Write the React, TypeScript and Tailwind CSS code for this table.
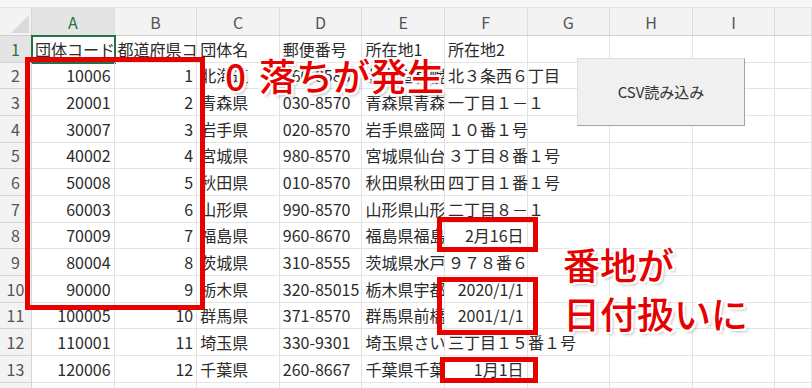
import React from "react";

type Cell = string | number;

const COLS = ["A", "B", "C", "D", "E", "F", "G", "H", "I", ""];

const ROWS: Cell[][] = [
  ["団体コード", "都道府県コード", "団体名", "郵便番号", "所在地1", "所在地2"],
  [10006, 1, "北海道", "060-8588", "北海道札幌", "北３条西６丁目"],
  [20001, 2, "青森県", "030-8570", "青森県青森", "一丁目１－１"],
  [30007, 3, "岩手県", "020-8570", "岩手県盛岡", "１０番１号"],
  [40002, 4, "宮城県", "980-8570", "宮城県仙台", "３丁目８番１号"],
  [50008, 5, "秋田県", "010-8570", "秋田県秋田", "四丁目１番１号"],
  [60003, 6, "山形県", "990-8570", "山形県山形", "二丁目８－１"],
  [70009, 7, "福島県", "960-8670", "福島県福島", "2月16日"],
  [80004, 8, "茨城県", "310-8555", "茨城県水戸", "９７８番６"],
  [90000, 9, "栃木県", "320-85015", "栃木県宇都", "2020/1/1"],
  [100005, 10, "群馬県", "371-8570", "群馬県前橋", "2001/1/1"],
  [110001, 11, "埼玉県", "330-9301", "埼玉県さい", "三丁目１５番１号"],
  [120006, 12, "千葉県", "260-8667", "千葉県千葉", "1月1日"],
  [],
];

// numbers and dates sit on the right like Excel does it
function isRight(v: Cell | undefined) {
  if (v === undefined || v === "") return false;
  if (typeof v === "number") return true;
  return /^\d+(\/|月)/.test(v);
}

const outline =
  "[text-shadow:0_0_2px_#fff,2px_0_0_#fff,-2px_0_0_#fff,0_2px_0_#fff,0_-2px_0_#fff,2px_2px_0_#fff,-2px_-2px_0_#fff,2px_-2px_0_#fff,-2px_2px_0_#fff,3px_3px_3px_rgba(0,0,0,0.25)]";

function HeaderRow() {
  return (
    <div className="grid grid-cols-[32px_repeat(9,82.6px)_1fr] h-[28px] bg-[#f3f3f3] border-b border-[#cfcfcf]">
      <div className="flex items-end justify-end border-r border-[#d6d6d6] pr-[2px] pb-[2px]">
        <svg width="18" height="18" viewBox="0 0 18 18">
          <polygon points="18,0 18,18 0,18" fill="#dadada" />
        </svg>
      </div>
      {COLS.map((c, i) => (
        <div
          key={i}
          className={
            "flex items-center justify-center text-[16px] border-r border-[#dcdcdc] " +
            (c === "A" ? "bg-[#e4e4e4] text-[#217346]" : "text-[#555]")
          }
        >
          {c}
        </div>
      ))}
    </div>
  );
}

function SheetRow({ n, cells }: { n: number; cells: Cell[] }) {
  return (
    <div className="grid grid-cols-[32px_repeat(9,82.6px)_1fr] h-[26.67px]">
      <div
        className={
          "flex items-center justify-center text-[16px] border-r border-b border-[#d6d6d6] " +
          (n === 1 ? "bg-[#e4e4e4] text-[#217346]" : "bg-[#f3f3f3] text-[#555]")
        }
      >
        {n}
      </div>
      {COLS.map((_, i) => {
        const v = cells[i];
        const right = isRight(v);
        const next = cells[i + 1];
        const spill = !right && (next === undefined || next === "");
        return (
          <div
            key={i}
            className={
              "flex items-center whitespace-nowrap px-[3px] text-[16px] leading-none text-[#2b2b2b] border-r border-b border-[#e3e3e3] " +
              (right ? "justify-end " : "justify-start ") +
              (spill ? "overflow-visible " : "overflow-hidden ") +
              (n === 1 && i === 0 ? "outline-2 outline-[#217346] -outline-offset-1" : "")
            }
          >
            {v === undefined ? "" : String(v)}
          </div>
        );
      })}
    </div>
  );
}

export default function App() {
  return (
    <div className="relative w-[812px] h-[388px] overflow-hidden bg-white font-['Noto_Sans_CJK_JP','Noto_Sans',sans-serif]">
      <div className="h-[8px] bg-[#f7f7f7] border-b border-[#e6e6e6]" />
      <HeaderRow />
      {ROWS.map((r, i) => (
        <SheetRow key={i} n={i + 1} cells={r} />
      ))}

      {/* CSV button floating on the sheet */}
      <button className="absolute left-[577px] top-[58px] w-[168px] h-[68px] bg-[#f0f0f0] border border-[#dedede] border-r-[#a3a3a3] border-b-[#a3a3a3] text-[15px] text-[#333]">
        CSV読み込み
      </button>

      {/* red callout boxes */}
      <div className="absolute left-[25px] top-[57px] w-[180px] h-[253px] border-[5px] border-[#e60000]" />
      <div className="absolute left-[437px] top-[217px] w-[101px] h-[35px] border-[5px] border-[#e60000]" />
      <div className="absolute left-[437px] top-[277px] w-[101px] h-[58px] border-[5px] border-[#e60000]" />
      <div className="absolute left-[440px] top-[357px] w-[98px] h-[26px] border-[5px] border-[#e60000]" />

      {/* annotations */}
      <div className={"absolute left-[225px] top-[57px] flex text-[37px] leading-none font-medium text-[#e60000] whitespace-nowrap " + outline}>
        <span>0</span>
        <span className="ml-[13px]">落ちが発生</span>
      </div>
      <div className={"absolute left-[563px] top-[240px] text-[37px] leading-[49px] font-medium text-[#e60000] whitespace-nowrap " + outline}>
        番地が
        <br />
        日付扱いに
      </div>
    </div>
  );
}
